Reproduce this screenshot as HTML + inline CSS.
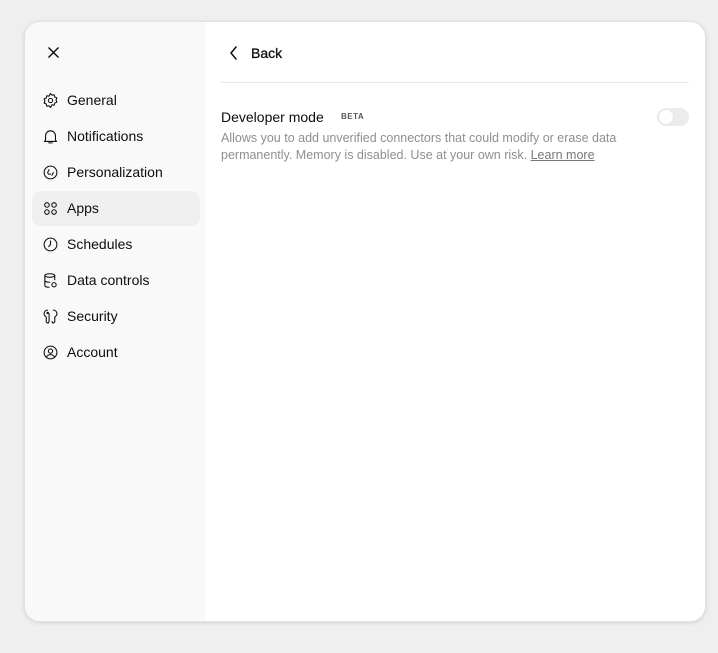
<!DOCTYPE html>
<html><head><meta charset="utf-8"><style>
body{margin:0;width:718px;height:653px;background:#efefef;font-family:"Liberation Sans",sans-serif;position:relative;overflow:hidden}
.modal{position:absolute;left:24px;top:21px;width:682px;height:601px;background:#fff;border-radius:16px;box-shadow:0 1px 4px rgba(0,0,0,.12);overflow:hidden;border:1px solid #e2e2e2;box-sizing:border-box}
.side{position:absolute;left:0;top:0;width:181px;height:100%;background:#f9f9f9}
.item{position:absolute;left:7px;width:168px;height:35px;border-radius:9px;font-size:14px;color:#0d0d0d;line-height:35px}
.item span{position:absolute;left:35px}
.item svg{position:absolute;left:10px;top:9px}
.sel{background:#efefef}
svg{fill:none;stroke:#0d0d0d;stroke-width:1.5;stroke-linecap:round;stroke-linejoin:round}
</style></head><body>
<div class="modal">
<div class="side">
<svg style="position:absolute;left:22px;top:24px" width="13" height="13" viewBox="0 0 14 14"><path d="M2 2L12 12M12 2L2 12"/></svg>
<div class="item" style="top:61px"><svg width="17" height="17" viewBox="0 0 24 24"><circle cx="12" cy="12" r="3"/><path d="M12 2l2 2.5 3.2-.6.8 3.1 3 1.3-1.2 3 1.2 3-3 1.3-.8 3.1-3.2-.6L12 22l-2-2.5-3.2.6-.8-3.1-3-1.3 1.2-3-1.2-3 3-1.3.8-3.1 3.2.6z"/></svg><span>General</span></div>
<div class="item" style="top:97px"><svg width="17" height="17" viewBox="0 0 24 24"><path d="M5 17V11a7 7 0 0114 0v6l1.5 2h-17zM9.5 21h5"/></svg><span>Notifications</span></div>
<div class="item" style="top:133px"><svg width="17" height="17" viewBox="0 0 24 24"><circle cx="12" cy="12" r="9"/><path d="M10 8l-2 4a2.5 2.5 0 004 2M14 16l2-4"/></svg><span>Personalization</span></div>
<div class="item sel" style="top:169px"><svg width="17" height="17" viewBox="0 0 24 24"><circle cx="7" cy="7" r="3.2"/><circle cx="17" cy="7" r="3.2"/><circle cx="7" cy="17" r="3.2"/><circle cx="17" cy="17" r="3.2"/></svg><span>Apps</span></div>
<div class="item" style="top:205px"><svg width="17" height="17" viewBox="0 0 24 24"><circle cx="12" cy="12" r="9"/><path d="M12 7v5l-2.5 3"/></svg><span>Schedules</span></div>
<div class="item" style="top:241px"><svg width="17" height="17" viewBox="0 0 24 24"><ellipse cx="11" cy="5" rx="7" ry="2.5"/><path d="M4 5v14c0 1.4 2.5 2.5 6 2.5M18 5v6M4 12c0 1.4 3 2.5 7 2.5"/><circle cx="17" cy="18" r="3"/></svg><span>Data controls</span></div>
<div class="item" style="top:277px"><svg width="17" height="17" viewBox="0 0 24 24"><path d="M8 3a5 5 0 00-4 8l2 2v7l2.5 1.5L10 19V8M16 3a5 5 0 014 8l-2 2v7l-2.5 1.5L14 19"/><circle cx="8" cy="7" r="1"/></svg><span>Security</span></div>
<div class="item" style="top:313px"><svg width="17" height="17" viewBox="0 0 24 24"><circle cx="12" cy="12" r="9"/><circle cx="12" cy="10" r="3"/><path d="M6.5 18a6.5 6.5 0 0111 0"/></svg><span>Account</span></div>
</div>
<svg style="position:absolute;left:204px;top:24px" width="10" height="14" viewBox="0 0 10 14"><path d="M7 1L2 7l5 6"/></svg>
<div style="position:absolute;left:226px;top:22px;font-size:14px;color:#0d0d0d;line-height:18px;-webkit-text-stroke:.3px #0d0d0d">Back</div>
<div style="position:absolute;left:196px;top:60px;width:468px;height:1px;background:#e8e8e8"></div>
<div style="position:absolute;left:196px;top:86px;font-size:14px;color:#0d0d0d;line-height:18px">Developer mode</div>
<div style="position:absolute;left:311px;top:87px;font-size:8px;font-weight:bold;color:#555;letter-spacing:.5px;line-height:16px;padding:0 5px;border-radius:8px">BETA</div>
<div style="position:absolute;left:632px;top:86px;width:32px;height:18px;border-radius:9px;background:#ececec"><div style="position:absolute;left:2px;top:2px;width:14px;height:14px;border-radius:50%;background:#fff;box-shadow:0 0 1px rgba(0,0,0,.15)"></div></div>
<div style="position:absolute;left:196px;top:108px;width:440px;font-size:12.5px;color:#8f8f8f;line-height:17px">Allows you to add unverified connectors that could modify or erase data permanently. Memory is disabled. Use at your own risk. <u style="color:#777">Learn more</u></div>
</div>
</body></html>
